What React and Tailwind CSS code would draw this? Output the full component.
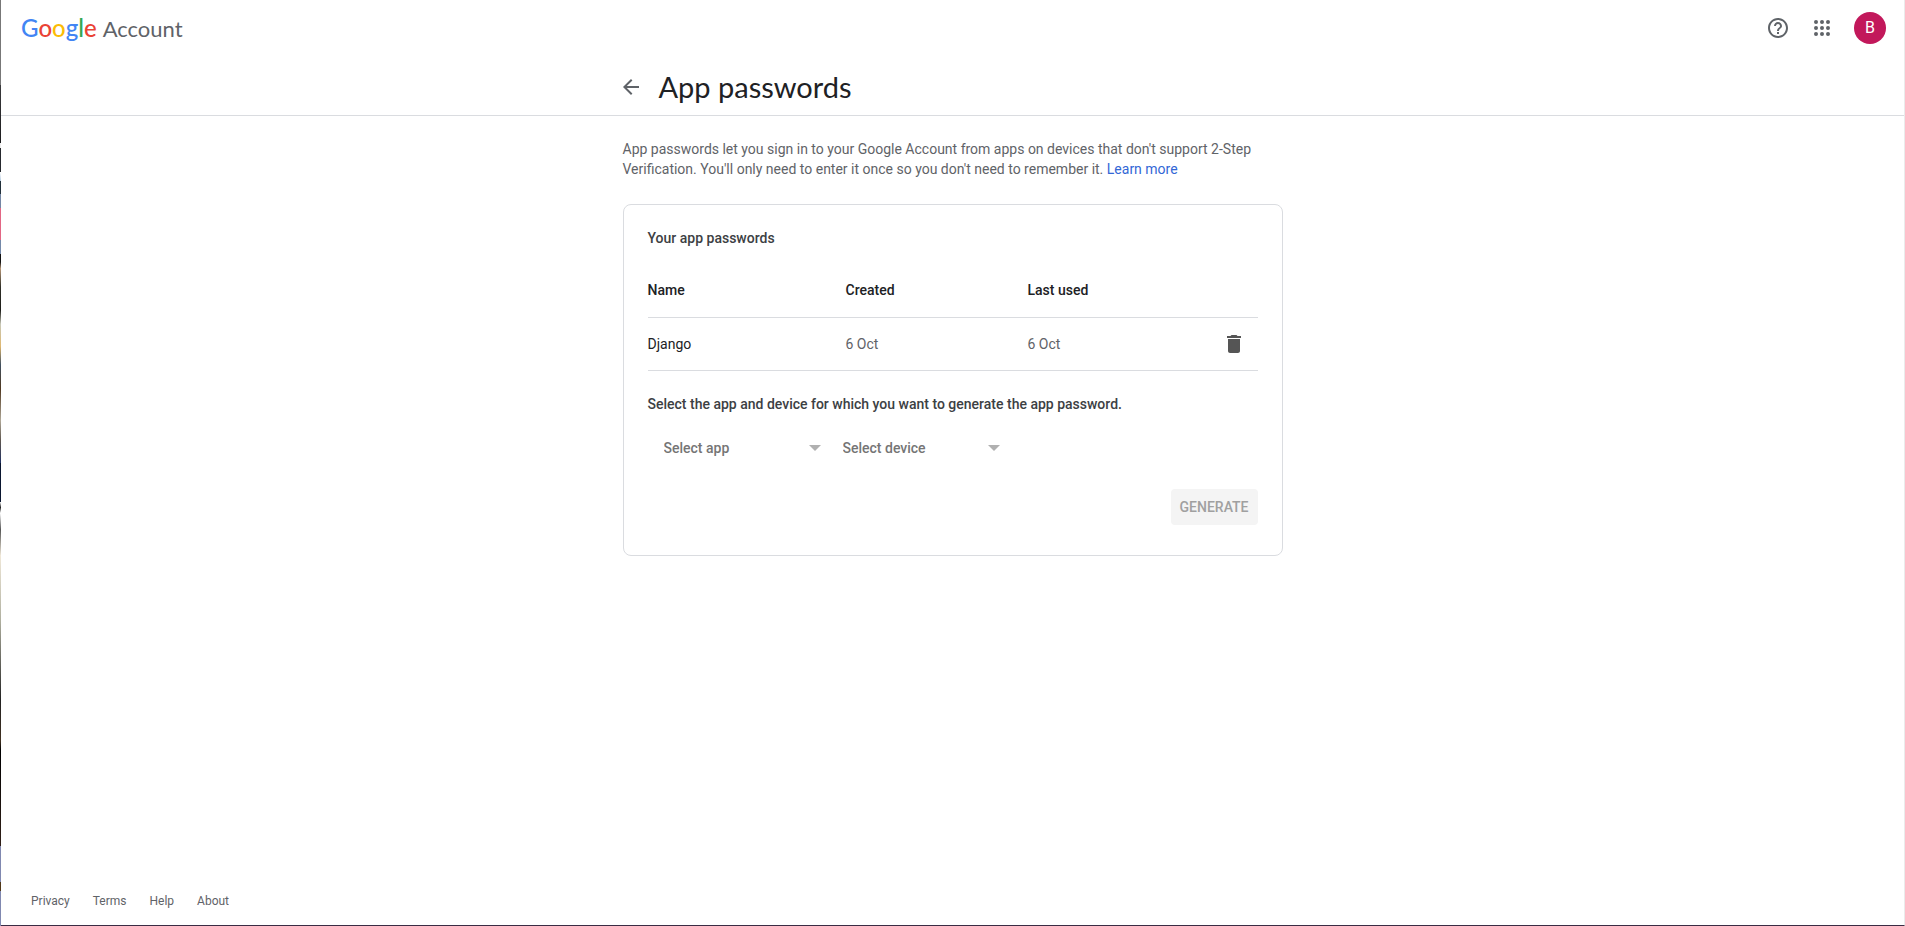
import React from "react";

const LOGO = [
  ["G", "text-[#4285f4]"],
  ["o", "text-[#ea4335]"],
  ["o", "text-[#fbbc05]"],
  ["g", "text-[#4285f4]"],
  ["l", "text-[#34a853]"],
  ["e", "text-[#ea4335]"],
];

const PASSWORDS = [{ name: "Django", created: "6 Oct", used: "6 Oct" }];

function Icon({ d, className }) {
  return (
    <svg viewBox="0 0 24 24" className={className} fill="currentColor" aria-hidden="true">
      <path d={d} />
    </svg>
  );
}

function Picker({ label }) {
  return (
    <div className="grid w-[179px] items-center">
      <select
        aria-label={label}
        className="col-start-1 row-start-1 h-8 w-full appearance-none bg-transparent pl-4 pr-8 text-sm font-medium text-[#757575] outline-none"
      >
        <option>{label}</option>
      </select>
      <svg
        viewBox="0 0 12 6"
        className="pointer-events-none col-start-1 row-start-1 mr-1.5 h-1.5 w-3 justify-self-end"
        aria-hidden="true"
      >
        <path d="M0 0h12L6 6z" fill="#b0b0b0" />
      </svg>
    </div>
  );
}

export default function App() {
  return (
    <div className="flex min-h-screen bg-white font-['Roboto',sans-serif] text-sm text-[#3c4043]">
      <div className="w-px shrink-0 bg-[linear-gradient(to_bottom,#777_0_9.2%,#3a3a3c_9.2%,#1c1c1e_15.4%,#eee_15.4%_16%,#26292e_16%_18.6%,#fff_18.6%,#b8cce0_19.5%,#22303a_19.5%_21%,#7486a4_21%_22.5%,#e26684_22.5%_25.9%,#7488a8_25.9%_27.4%,#111_27.4%_28.3%,#b89878_29%,#303028_31%,#1c1c18_33.5%,#c8c8b8_35%,#e0b870_37.4%,#405060_39.4%,#503820_42%,#b0a898_45.4%,#605850_47.5%,#203060_50%,#0a1630_50%_54.2%,#fff_54.2%,#222_54.8%,#fff_55.4%,#555_57.2%,#f0e8d8_60%,#b0b0a0_67%,#222_75.6%,#403020_80%,#000_81%,#302018_91.4%,#8088b0_91.4%_95.2%,#503818_95.2%_96.2%,#8088b0_96.2%)]" />
      <div className="flex min-w-0 flex-1 flex-col border-b border-r border-b-[#3a2c44] border-r-[#ebebeb]">
        <header className="flex h-14 items-center justify-between pl-5 pr-[18px]">
          <a href="#" className="flex items-baseline gap-1.5 font-['Lato',sans-serif] text-[22px]">
            <span className="text-2xl font-medium">
              {LOGO.map(([c, color], i) => (
                <span key={i} className={color}>{c}</span>
              ))}
            </span>
            <span className="text-[#5f6368]">Account</span>
          </a>
          <div className="flex items-center text-[#5f6368]">
            <button aria-label="Help" className="mr-5">
              <Icon
                className="size-6"
                d="M11 18h2v-2h-2v2zm1-16C6.48 2 2 6.48 2 12s4.48 10 10 10 10-4.48 10-10S17.52 2 12 2zm0 18c-4.41 0-8-3.59-8-8s3.59-8 8-8 8 3.59 8 8-3.59 8-8 8zm0-14c-2.21 0-4 1.79-4 4h2c0-1.1.9-2 2-2s2 .9 2 2c0 2-3 1.75-3 5h2c0-2.25 3-2.5 3-5 0-2.21-1.79-4-4-4z"
              />
            </button>
            <button aria-label="Google apps" className="mr-5">
              <Icon
                className="size-6"
                d="M6 8a2 2 0 1 0 0-4 2 2 0 0 0 0 4zm6 0a2 2 0 1 0 0-4 2 2 0 0 0 0 4zm6 0a2 2 0 1 0 0-4 2 2 0 0 0 0 4zM6 14a2 2 0 1 0 0-4 2 2 0 0 0 0 4zm6 0a2 2 0 1 0 0-4 2 2 0 0 0 0 4zm6 0a2 2 0 1 0 0-4 2 2 0 0 0 0 4zM6 20a2 2 0 1 0 0-4 2 2 0 0 0 0 4zm6 0a2 2 0 1 0 0-4 2 2 0 0 0 0 4zm6 0a2 2 0 1 0 0-4 2 2 0 0 0 0 4z"
              />
            </button>
            <button aria-label="Account" className="size-8 rounded-full bg-[#c2185b] text-base text-white">
              B
            </button>
          </div>
        </header>

        <div className="border-b border-[#dadce0]">
          <div className="mx-auto flex h-[59px] w-full max-w-[660px] items-center gap-4 pt-0.5">
            <a href="#" aria-label="Back" className="-ml-1 text-[#5f6368]">
              <Icon className="size-6" d="M20 11H7.83l5.59-5.59L12 4l-8 8 8 8 1.41-1.41L7.83 13H20v-2z" />
            </a>
            <h1 className="font-['Lato',sans-serif] text-[29px] leading-9 text-[#202124]">App passwords</h1>
          </div>
        </div>

        <main className="mx-auto w-full max-w-[660px] flex-1 pt-[23px]">
          <p className="leading-5 text-[#5f6368]">
            App passwords let you sign in to your Google Account from apps on devices that don't support 2-Step
            Verification. You'll only need to enter it once so you don't need to remember it.{" "}
            <a href="#" className="text-[#3367d6]">Learn more</a>
          </p>

          <section className="mt-[25px] rounded-lg border border-[#dadce0] px-6 pb-[30px] pt-[23px]">
            <h2 className="font-medium leading-5">Your app passwords</h2>
            <table className="mt-4 w-full table-fixed text-left">
              <thead>
                <tr className="h-[53px] border-b border-[#dadce0] text-[#202124]">
                  <th className="w-[198px] font-medium">Name</th>
                  <th className="w-[182px] font-medium">Created</th>
                  <th className="font-medium">Last used</th>
                  <th className="w-12" aria-label="Remove" />
                </tr>
              </thead>
              <tbody>
                {PASSWORDS.map((p) => (
                  <tr key={p.name} className="h-[53px] border-b border-[#dadce0] text-[#5f6368]">
                    <td className="text-[#202124]">{p.name}</td>
                    <td>{p.created}</td>
                    <td>{p.used}</td>
                    <td>
                      <button aria-label={`Remove ${p.name}`} className="block pl-3 text-[#555]">
                        <Icon
                          className="size-6"
                          d="M6 19c0 1.1.9 2 2 2h8c1.1 0 2-.9 2-2V7H6v12zM19 4h-3.5l-1-1h-5l-1 1H5v2h14V4z"
                        />
                      </button>
                    </td>
                  </tr>
                ))}
              </tbody>
            </table>
            <h2 className="mt-[23px] font-medium leading-5">
              Select the app and device for which you want to generate the app password.
            </h2>
            <div className="mt-[18px] flex">
              <Picker label="Select app" />
              <Picker label="Select device" />
            </div>
            <div className="mt-[25px] flex justify-end">
              <button disabled className="h-9 rounded-sm bg-[#f4f4f4] px-[9px] font-medium text-[#a0a0a0]">
                GENERATE
              </button>
            </div>
          </section>
        </main>

        <footer className="flex gap-[23px] px-[30px] pb-4 text-xs leading-4 text-[#5f6368]">
          <a href="#">Privacy</a>
          <a href="#">Terms</a>
          <a href="#">Help</a>
          <a href="#">About</a>
        </footer>
      </div>
    </div>
  );
}
